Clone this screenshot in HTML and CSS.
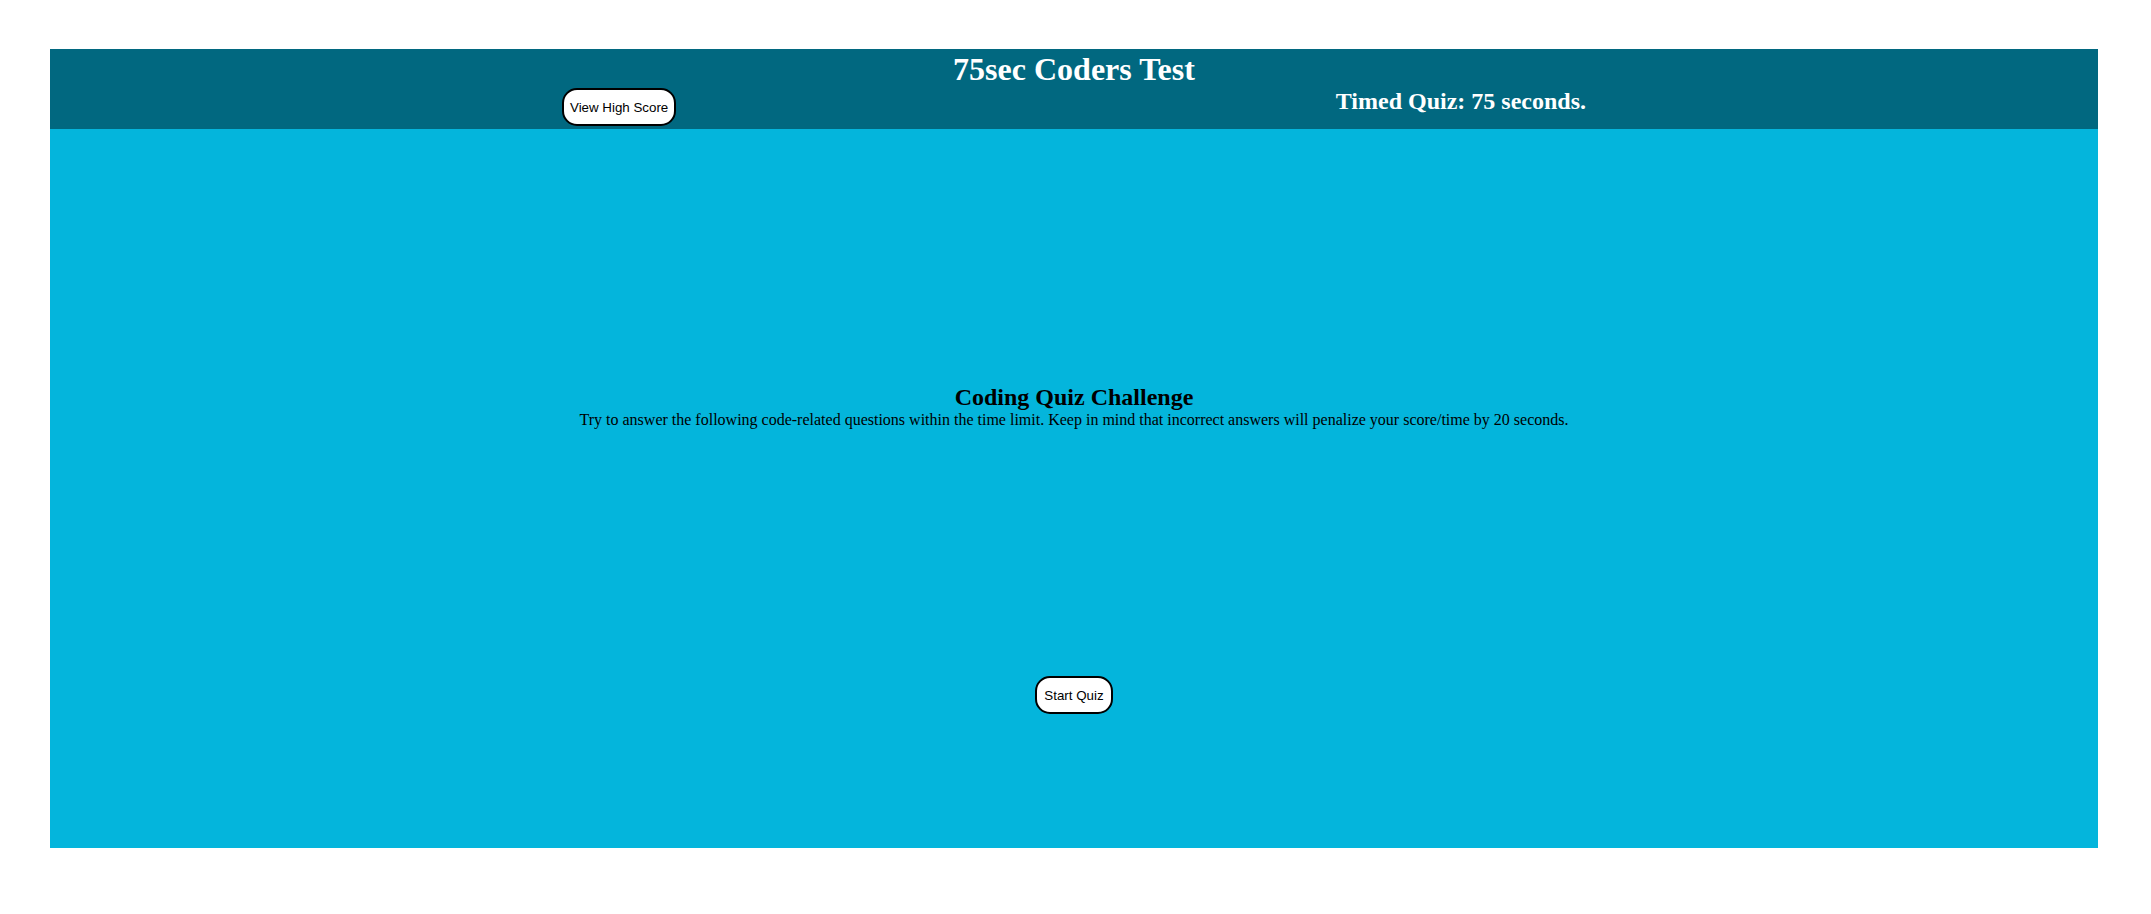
FILE: index.html
```html
<!DOCTYPE html>
<html lang="en">
<head>
<meta charset="utf-8">
<title>75sec Coders Test</title>
<link rel="stylesheet" href="styles.css">
</head>
<body>
<div class="page">
  <header class="topbar">
    <h1 class="title">75sec Coders Test</h1>
    <div class="topbar-row">
      <button class="pill-btn header-btn">View High Score</button>
      <h2 class="timer">Timed Quiz: 75 seconds.</h2>
    </div>
  </header>
  <main class="quiz">
    <h2 class="quiz-title">Coding Quiz Challenge</h2>
    <p class="quiz-text">Try to answer the following code-related questions within the time limit. Keep in mind that incorrect answers will penalize your score/time by 20 seconds.</p>
    <div class="quiz-actions">
      <button class="pill-btn start-btn">Start Quiz</button>
    </div>
  </main>
</div>
</body>
</html>
```

FILE: styles.css
```css
html, body {
  margin: 0;
  padding: 0;
  background: #ffffff;
}

body {
  font-family: "Liberation Serif", "Times New Roman", serif;
}

.page {
  padding: 49px 53px 0 50px;
}

.topbar {
  background: #016880;
  padding: 2px 0;
  height: 80px;
  box-sizing: border-box;
  text-align: center;
  color: #ffffff;
}

.title {
  margin: 0;
  font-size: 32px;
  font-weight: bold;
}

.topbar-row {
  width: 50%;
  margin: 0 auto;
  display: flex;
  justify-content: space-between;
  align-items: flex-start;
}

.timer {
  margin: 0;
  font-size: 24px;
  font-weight: bold;
}

.pill-btn {
  font-family: "Liberation Sans", Arial, sans-serif;
  font-size: 13.333px;
  color: #000000;
  background: #ffffff;
  border: 2px solid #000000;
  border-radius: 15px;
  padding: 9.5px 6px;
  line-height: normal;
  cursor: pointer;
}

.quiz {
  background: #04b5dc;
  height: 719px;
  box-sizing: border-box;
  padding-top: 255px;
  text-align: center;
  color: #000000;
}

.quiz-title {
  margin: 0;
  font-size: 24px;
  font-weight: bold;
}

.quiz-text {
  margin: 0;
  font-size: 16px;
}

.quiz-actions {
  margin-top: 247px;
  display: flex;
  justify-content: center;
}

.start-btn {
  padding: 9.5px 7px;
}
```
